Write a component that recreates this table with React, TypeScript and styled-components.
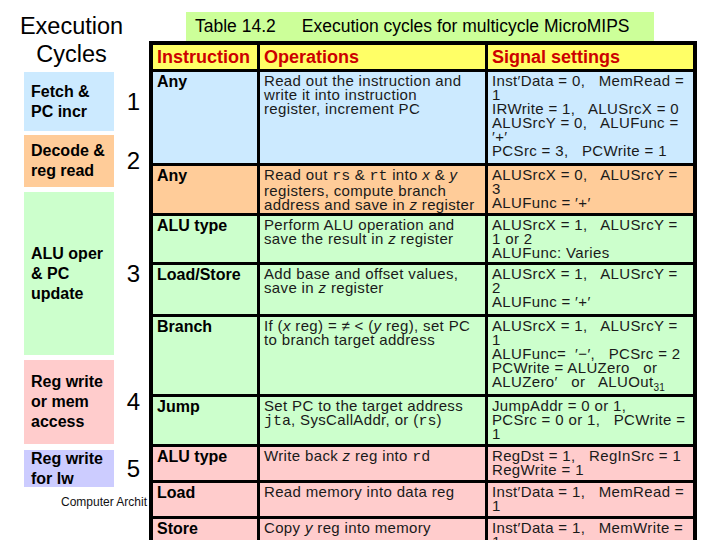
import React from "react";
import styled, { createGlobalStyle } from "styled-components";

const Global = createGlobalStyle`
  html, body { margin: 0; padding: 0; background: #fff; overflow: hidden; }
  body { font-family: "Liberation Sans", Arial, sans-serif; color: #000; }
`;

const C = {
  blue: "#cceaff",
  orange: "#ffcc99",
  green: "#ccffcc",
  pink: "#ffcccc",
  lav: "#ccccff",
  yellow: "#ffff66",
  caption: "#ccff99",
};

const Page = styled.div`
  width: 720px;
  height: 540px;
  overflow: hidden;
  display: flex;
  align-items: flex-start;
`;

const Side = styled.aside`
  width: 149px;
  flex: none;
  display: flex;
  flex-direction: column;
  overflow: hidden;
`;

const Title = styled.h1`
  margin: 12px 0 0;
  width: 143px;
  font-weight: normal;
  font-size: 23.5px;
  line-height: 28px;
  text-align: center;
`;

const Stages = styled.div`
  display: flex;
  flex-direction: column;
`;

const Stage = styled.div<{ $h: number; $gap: number }>`
  display: flex;
  align-items: center;
  height: ${(p) => p.$h}px;
  margin-top: ${(p) => p.$gap}px;
`;

const StageBox = styled.div<{ $bg: string }>`
  margin-left: 24px;
  width: 90px;
  height: 100%;
  box-sizing: border-box;
  padding-left: 7px;
  background: ${(p) => p.$bg};
  display: flex;
  flex-direction: column;
  justify-content: center;
  font-weight: bold;
  font-size: 16px;
  line-height: 20px;
  white-space: nowrap;
`;

const StageNum = styled.div`
  width: 35px;
  padding-left: 4px;
  box-sizing: border-box;
  text-align: center;
  font-size: 24px;
`;

const Footer = styled.div`
  margin-top: 8px;
  padding-left: 61px;
  font-size: 12px;
  line-height: 14px;
  white-space: nowrap;
  color: #111;
`;

const Main = styled.main`
  display: flex;
  flex-direction: column;
`;

const Caption = styled.div`
  margin: 12px 0 0 37px;
  width: 468px;
  height: 29px;
  box-sizing: border-box;
  padding-left: 9px;
  background: ${C.caption};
  display: flex;
  align-items: center;
  font-size: 17.5px;
  white-space: nowrap;
`;

const CapGap = styled.span`
  display: inline-block;
  width: 26px;
`;

const Table = styled.div`
  width: 548px;
  box-sizing: border-box;
  background: #000;
  padding: 4px 4px 0;
  display: flex;
  flex-direction: column;
  gap: 3px;
`;

const Row = styled.div<{ $h: number }>`
  display: grid;
  grid-template-columns: 104px 225px 205px;
  column-gap: 3px;
  height: ${(p) => p.$h}px;
`;

const HeadCell = styled.div`
  background: ${C.yellow};
  color: #cc0000;
  font-weight: bold;
  font-size: 18px;
  display: flex;
  align-items: center;
  padding-left: 4px;
  white-space: nowrap;
`;

const Cell = styled.div<{ $bg: string }>`
  background: ${(p) => p.$bg};
  padding: 2px 4px 0;
  overflow: hidden;
  font-size: 15px;
  line-height: 14px;
  letter-spacing: 0.35px;
  color: #1a1a1a;
`;

const InstCell = styled(Cell)`
  font-weight: bold;
  font-size: 16px;
  letter-spacing: 0;
  color: #000;
  padding-top: 3px;
`;

const Line = styled.div`
  white-space: pre;
`;

const I = styled.i`
  font-style: italic;
`;

const M = styled.code`
  font-family: "Liberation Mono", "Courier New", monospace;
  font-size: 15px;
  letter-spacing: 0;
`;

const Sub = styled.sub`
  font-size: 10px;
  line-height: 0;
  vertical-align: -4px;
`;

type RowData = {
  h: number;
  bg: string;
  inst: string;
  ops: React.ReactNode[];
  sig: React.ReactNode[];
};

const rows: RowData[] = [
  {
    h: 91,
    bg: C.blue,
    inst: "Any",
    ops: ["Read out the instruction and", "write it into instruction", "register, increment PC"],
    sig: [
      "Inst′Data = 0,   MemRead =",
      "1",
      "IRWrite = 1,   ALUSrcX = 0",
      "ALUSrcY = 0,   ALUFunc =",
      "′+′",
      "PCSrc = 3,   PCWrite = 1",
    ],
  },
  {
    h: 47,
    bg: C.orange,
    inst: "Any",
    ops: [
      <>
        Read out <M>rs</M> &amp; <M>rt</M> into <I>x</I> &amp; <I>y</I>
      </>,
      "registers, compute branch",
      <>
        address and save in <I>z</I> register
      </>,
    ],
    sig: ["ALUSrcX = 0,   ALUSrcY =", "3", "ALUFunc = ′+′"],
  },
  {
    h: 46,
    bg: C.green,
    inst: "ALU type",
    ops: [
      "Perform ALU operation and",
      <>
        save the result in <I>z</I> register
      </>,
    ],
    sig: ["ALUSrcX = 1,   ALUSrcY =", "1 or 2", "ALUFunc: Varies"],
  },
  {
    h: 49,
    bg: C.green,
    inst: "Load/Store",
    ops: [
      "Add base and offset values,",
      <>
        save in <I>z</I> register
      </>,
    ],
    sig: ["ALUSrcX = 1,   ALUSrcY =", "2", "ALUFunc = ′+′"],
  },
  {
    h: 77,
    bg: C.green,
    inst: "Branch",
    ops: [
      <>
        If (<I>x</I> reg) = ≠ &lt; (<I>y</I> reg), set PC
      </>,
      "to branch target address",
    ],
    sig: [
      "ALUSrcX = 1,   ALUSrcY =",
      "1",
      "ALUFunc=  ′−′,   PCSrc = 2",
      "PCWrite = ALUZero   or",
      <>
        ALUZero′   or   ALUOut<Sub>31</Sub>
      </>,
    ],
  },
  {
    h: 47,
    bg: C.green,
    inst: "Jump",
    ops: [
      "Set PC to the target address",
      <>
        <M>jta</M>, SysCallAddr, or (<M>rs</M>)
      </>,
    ],
    sig: ["JumpAddr = 0 or 1,", "PCSrc = 0 or 1,   PCWrite =", "1"],
  },
  {
    h: 33,
    bg: C.pink,
    inst: "ALU type",
    ops: [
      <>
        Write back <I>z</I> reg into <M>rd</M>
      </>,
    ],
    sig: ["RegDst = 1,   RegInSrc = 1", "RegWrite = 1"],
  },
  {
    h: 33,
    bg: C.pink,
    inst: "Load",
    ops: ["Read memory into data reg"],
    sig: ["Inst′Data = 1,   MemRead =", "1"],
  },
  {
    h: 40,
    bg: C.pink,
    inst: "Store",
    ops: [
      <>
        Copy <I>y</I> reg into memory
      </>,
    ],
    sig: ["Inst′Data = 1,   MemWrite =", "1"],
  },
];

const stages = [
  { h: 59, gap: 4, bg: C.blue, lines: ["Fetch &", "PC incr"], n: "1" },
  { h: 52, gap: 4, bg: C.orange, lines: ["Decode &", "reg read"], n: "2" },
  { h: 163, gap: 5, bg: C.green, lines: ["ALU oper", "& PC", "update"], n: "3" },
  { h: 84, gap: 5, bg: C.pink, lines: ["Reg write", "or mem", "access"], n: "4" },
  { h: 37, gap: 6, bg: C.lav, lines: ["Reg write", "for lw"], n: "5" },
];

export default function App() {
  return (
    <Page>
      <Global />
      <Side>
        <Title>
          Execution
          <br />
          Cycles
        </Title>
        <Stages>
          {stages.map((s) => (
            <Stage key={s.n} $h={s.h} $gap={s.gap}>
              <StageBox $bg={s.bg}>
                {s.lines.map((l) => (
                  <div key={l}>{l}</div>
                ))}
              </StageBox>
              <StageNum>{s.n}</StageNum>
            </Stage>
          ))}
        </Stages>
        <Footer>Computer Archit</Footer>
      </Side>
      <Main>
        <Caption>
          Table 14.2<CapGap />Execution cycles for multicycle MicroMIPS
        </Caption>
        <Table>
          <Row $h={24}>
            <HeadCell>Instruction</HeadCell>
            <HeadCell>Operations</HeadCell>
            <HeadCell>Signal settings</HeadCell>
          </Row>
          {rows.map((r, i) => (
            <Row key={i} $h={r.h}>
              <InstCell $bg={r.bg}>{r.inst}</InstCell>
              <Cell $bg={r.bg}>
                {r.ops.map((o, j) => (
                  <Line key={j}>{o}</Line>
                ))}
              </Cell>
              <Cell $bg={r.bg}>
                {r.sig.map((s, j) => (
                  <Line key={j}>{s}</Line>
                ))}
              </Cell>
            </Row>
          ))}
        </Table>
      </Main>
    </Page>
  );
}
